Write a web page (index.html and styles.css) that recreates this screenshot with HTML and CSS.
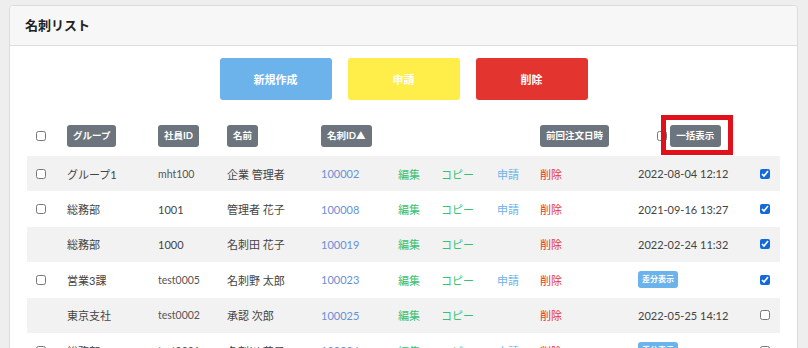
FILE: index.html
```html
<!DOCTYPE html>
<html lang="ja">
<head>
    <meta charset="UTF-8">
    <meta name="viewport" content="width=device-width, initial-scale=1.0">
    <title>名刺リスト</title>
    <link rel="stylesheet" href="styles.css">
</head>
<body>
    <div class="card">
        <div class="card-header">名刺リスト</div>
        <div class="card-body">
            <div class="actions">
                <button class="btn btn-new">新規作成</button>
                <button class="btn btn-apply">申請</button>
                <button class="btn btn-delete">削除</button>
            </div>

            <table class="list">
                <colgroup>
                    <col style="width:40px">
                    <col style="width:91px">
                    <col style="width:69px">
                    <col style="width:94px">
                    <col style="width:77px">
                    <col style="width:43px">
                    <col style="width:56px">
                    <col style="width:43px">
                    <col style="width:98px">
                    <col style="width:122px">
                    <col style="width:20px">
                </colgroup>
                <thead>
                    <tr>
                        <th><input type="checkbox" class="cb"></th>
                        <th><span class="tag">グループ</span></th>
                        <th><span class="tag">社員ID</span></th>
                        <th><span class="tag">名前</span></th>
                        <th><span class="tag">名刺ID▲</span></th>
                        <th></th>
                        <th></th>
                        <th></th>
                        <th><span class="tag">前回注文日時</span></th>
                        <th class="bulk-cell">
                            <input type="checkbox" class="cb cb-bulk">
                            <span class="bulk"><span class="tag">一括表示</span></span>
                        </th>
                        <th></th>
                    </tr>
                </thead>
                <tbody>
                    <tr>
                        <td><input type="checkbox" class="cb"></td>
                        <td>グループ1</td>
                        <td class="small">mht100</td>
                        <td>企業 管理者</td>
                        <td class="id">100002</td>
                        <td class="edit">編集</td>
                        <td class="edit">コピー</td>
                        <td class="apply">申請</td>
                        <td class="del">削除</td>
                        <td>2022-08-04 12:12</td>
                        <td><input type="checkbox" class="cb" checked></td>
                    </tr>
                    <tr>
                        <td><input type="checkbox" class="cb"></td>
                        <td>総務部</td>
                        <td>1001</td>
                        <td>管理者 花子</td>
                        <td class="id">100008</td>
                        <td class="edit">編集</td>
                        <td class="edit">コピー</td>
                        <td class="apply">申請</td>
                        <td class="del">削除</td>
                        <td>2021-09-16 13:27</td>
                        <td><input type="checkbox" class="cb" checked></td>
                    </tr>
                    <tr>
                        <td></td>
                        <td>総務部</td>
                        <td>1000</td>
                        <td>名刺田 花子</td>
                        <td class="id">100019</td>
                        <td class="edit">編集</td>
                        <td class="edit">コピー</td>
                        <td></td>
                        <td class="del">削除</td>
                        <td>2022-02-24 11:32</td>
                        <td><input type="checkbox" class="cb" checked></td>
                    </tr>
                    <tr>
                        <td><input type="checkbox" class="cb"></td>
                        <td>営業3課</td>
                        <td class="small">test0005</td>
                        <td>名刺野 太郎</td>
                        <td class="id">100023</td>
                        <td class="edit">編集</td>
                        <td class="edit">コピー</td>
                        <td class="apply">申請</td>
                        <td class="del">削除</td>
                        <td><span class="diff">差分表示</span></td>
                        <td><input type="checkbox" class="cb" checked></td>
                    </tr>
                    <tr>
                        <td></td>
                        <td>東京支社</td>
                        <td class="small">test0002</td>
                        <td>承認 次郎</td>
                        <td class="id">100025</td>
                        <td class="edit">編集</td>
                        <td class="edit">コピー</td>
                        <td></td>
                        <td class="del">削除</td>
                        <td>2022-05-25 14:12</td>
                        <td><input type="checkbox" class="cb"></td>
                    </tr>
                    <tr>
                        <td><input type="checkbox" class="cb"></td>
                        <td>総務部</td>
                        <td class="small">test0001</td>
                        <td>名刺川 花子</td>
                        <td class="id">100026</td>
                        <td class="edit">編集</td>
                        <td class="edit">コピー</td>
                        <td class="apply">申請</td>
                        <td class="del">削除</td>
                        <td><span class="diff">差分表示</span></td>
                        <td><input type="checkbox" class="cb"></td>
                    </tr>
                </tbody>
            </table>
        </div>
    </div>
</body>
</html>
```

FILE: styles.css
```css
* {
    margin: 0;
    padding: 0;
    box-sizing: border-box;
}

body {
    background: #eeeeee;
    padding: 5px 10px 0 9px;
    font-family: Lato, "Noto Sans CJK JP", sans-serif;
    font-size: 11px;
    color: #444;
}

.card {
    background: #fff;
    border: 1px solid #dcdcdc;
    border-radius: 4px;
}

.card-header {
    height: 40px;
    line-height: 38px;
    padding-left: 15px;
    background: #f7f7f7;
    border-bottom: 1px solid #dcdcdc;
    font-size: 13px;
    font-weight: bold;
    color: #222;
    border-radius: 4px 4px 0 0;
}

.card-body {
    padding: 12px 17px 0 17px;
}

.actions {
    display: flex;
    justify-content: center;
    gap: 16px;
    margin-bottom: 16px;
}

.btn {
    width: 112px;
    height: 42px;
    border: none;
    border-radius: 3px;
    color: #fff;
    font-family: inherit;
    font-size: 11px;
    font-weight: bold;
}

.btn-new {
    background: #6cb2eb;
}

.btn-apply {
    background: #ffed4a;
}

.btn-delete {
    background: #e3342f;
}

.list {
    width: 753px;
    table-layout: fixed;
    border-collapse: collapse;
}

.list th {
    height: 40px;
    text-align: left;
    vertical-align: middle;
    font-weight: normal;
}

.list td {
    height: 35.4px;
    white-space: nowrap;
    overflow: hidden;
}

.list tbody tr:nth-child(odd) {
    background: #f2f2f2;
}

.list th:first-child,
.list td:first-child {
    padding-left: 9px;
}

.cb {
    display: block;
    width: 10px;
    height: 10px;
    accent-color: #1469d9;
}

.tag {
    display: inline-block;
    height: 22px;
    line-height: 22px;
    padding: 0 6px;
    background: #6c757d;
    color: #fff;
    border-radius: 3px;
    font-size: 9.5px;
    font-weight: bold;
}

.bulk-cell {
    padding-left: 19px;
}

.bulk-cell .cb,
.bulk-cell .bulk {
    display: inline-block;
    vertical-align: middle;
}

.bulk {
    position: relative;
}

.bulk .tag {
    width: 51px;
    text-align: center;
    padding: 0;
}

.bulk::after {
    content: "";
    position: absolute;
    top: -10px;
    left: -9px;
    right: -12px;
    bottom: -8px;
    border: 5px solid #e0111b;
}

.small {
    font-size: 10.5px;
    color: #555;
}

.id {
    color: #6990d4;
}

.edit {
    color: #38c172;
}

.apply {
    color: #6cb2eb;
}

.del {
    color: #e3342f;
}

.diff {
    display: inline-block;
    height: 17px;
    line-height: 17px;
    padding: 0 4px;
    background: #6cb2eb;
    color: #fff;
    border-radius: 3px;
    font-size: 8px;
    font-weight: bold;
}
```
